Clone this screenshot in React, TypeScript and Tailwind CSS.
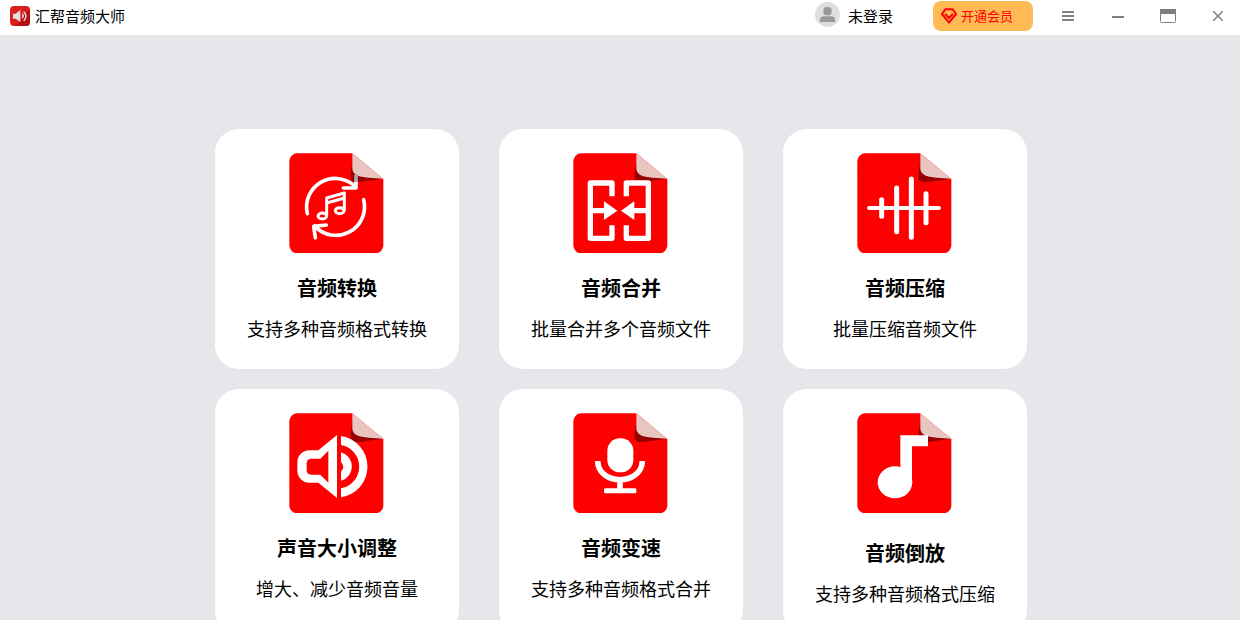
import type { ReactNode } from "react";

function FileIcon({ children }: { children: ReactNode }) {
	return (
		<svg className="w-24 h-[100px]" viewBox="27 23 288 300" fill="none" aria-hidden="true">
			<path
				d="M52 24H217L310 101V300a24 24 0 0 1-24 24H52a24 24 0 0 1-24-24V48a24 24 0 0 1 24-24z"
				fill="#ff0000"
			/>
			<path d="M217 48C214 74 205 106 222 110C244 112 278 103 310 101L240 80z" fill="#980000" />
			<path d="M217 24L310 101C284 96 246 99 228 88C219 82 217 76 217 68z" fill="#e8c6bf" />
			{children}
		</svg>
	);
}

function ConvertGlyph() {
	return (
		<g stroke="#fff" strokeLinecap="round" strokeLinejoin="round">
			<path
				d="M82 205A86 86 0 0 1 226 124M190 128H228V108M251 163A86 86 0 0 1 104 242M106 277L101 243L139 239"
				strokeWidth="11"
			/>
			<path d="M228 88V110" stroke="#a8a8a8" strokeWidth="11" strokeLinecap="butt" />
			<path d="M140 210V158L193 143V194M141 173L193 158" strokeWidth="9" />
			<ellipse cx="127" cy="212" rx="13" ry="9" strokeWidth="9" />
			<ellipse cx="179" cy="196" rx="13" ry="9" strokeWidth="9" />
		</g>
	);
}

function MergeGlyph() {
	return (
		<>
			<path
				d="M144 153V113H79V279H144V240M187 153V113H253V279H187V240M79 196H124M208 196H253"
				stroke="#fff"
				strokeWidth="16"
				strokeLinejoin="round"
			/>
			<path d="M120 168L160 196L120 224zM211 168L171 196L211 224z" fill="#fff" />
		</>
	);
}

function CompressGlyph() {
	return (
		<>
			<path d="M63 188H273" stroke="#fff" strokeWidth="12" strokeLinecap="round" />
			<path
				d="M101 163V213M146 128V259M190 101V276M234 145V232"
				stroke="#fff"
				strokeWidth="15"
				strokeLinecap="round"
			/>
		</>
	);
}

function VolumeGlyph() {
	return (
		<g fill="#fff">
			<path
				fillRule="evenodd"
				d="M171 89V278L115 232H88A36 36 0 0 1 52 196V171A36 36 0 0 1 88 135H115zM145 136L121 160H94Q80 160 80 174V194Q80 208 94 208H121L145 232z"
			/>
			<path d="M183 92A93 93 0 0 1 183 276V249A66 66 0 0 0 183 119z" />
			<path d="M183 141A44 44 0 0 1 183 226V199Q197 184 183 170z" />
		</g>
	);
}

function MicGlyph() {
	return (
		<>
			<rect x="130" y="99" width="78" height="102" rx="37" fill="#fff" />
			<path d="M101 167C103 242 233 242 235 167M168 224V252" stroke="#fff" strokeWidth="17" />
			<rect x="120" y="249" width="97" height="15" rx="4" fill="#fff" />
		</>
	);
}

function NoteGlyph() {
	return (
		<g fill="#fff">
			<ellipse cx="141" cy="231" rx="52" ry="48" />
			<path d="M157 90H240V123H192V232H157z" />
		</g>
	);
}

const features = [
	{ title: "音频转换", desc: "支持多种音频格式转换", glyph: <ConvertGlyph />, spacing: "mt-5" },
	{ title: "音频合并", desc: "批量合并多个音频文件", glyph: <MergeGlyph />, spacing: "mt-5" },
	{ title: "音频压缩", desc: "批量压缩音频文件", glyph: <CompressGlyph />, spacing: "mt-5" },
	{ title: "声音大小调整", desc: "增大、减少音频音量", glyph: <VolumeGlyph />, spacing: "mt-5" },
	{ title: "音频变速", desc: "支持多种音频格式合并", glyph: <MicGlyph />, spacing: "mt-5" },
	{ title: "音频倒放", desc: "支持多种音频格式压缩", glyph: <NoteGlyph />, spacing: "mt-[25px]" },
];

const windowButton = "flex w-11 h-8 items-center justify-center text-[#808080] hover:bg-gray-100";

function TitleBar() {
	return (
		<header className="flex shrink-0 h-[35px] pb-[3px] items-center bg-white">
			<div className="flex items-center gap-[5px] pl-[10px]">
				<svg className="w-5 h-5" viewBox="0 0 60 60" fill="none" aria-hidden="true">
					<rect width="60" height="60" rx="12" fill="#dc1f1f" />
					<path d="M60 8L18 60H48A12 12 0 0 0 60 48z" fill="#b51013" />
					<path d="M9 23H17L31 12V48L17 38H9z" fill="#e2e2e2" />
					<path d="M37 24Q43 30 37 36M41 17Q55 30 41 44" stroke="#e2e2e2" strokeWidth="4" />
				</svg>
				<h1 className="text-[15px] leading-5">汇帮音频大师</h1>
			</div>

			<div className="flex items-center ml-auto">
				<button type="button" className="flex items-start gap-2 mr-10 text-[15px] leading-7">
					<svg className="w-[25px] h-[25px]" viewBox="0 0 75 75" aria-hidden="true">
						<circle cx="37.5" cy="37.5" r="37.5" fill="#dedede" />
						<rect x="25" y="15" width="25" height="25" rx="11" fill="#999" />
						<path d="M15 60V55Q15 43 27 43H48Q60 43 60 55V60z" fill="#999" />
					</svg>
					未登录
				</button>
				<button
					type="button"
					className="flex w-[100px] h-[30px] items-center gap-1 pl-2 mr-[13px] rounded-lg bg-[#ffb955] text-[13px] leading-5 text-[#ff0000]"
				>
					<svg className="w-4 h-4" viewBox="0 0 48 48" fill="none" stroke="currentColor" strokeWidth="6" strokeLinejoin="round" aria-hidden="true">
						<path d="M13 4H35L45 18L24 44L3 18z" />
						<path d="M14 19L24 30L34 19" strokeLinecap="round" />
					</svg>
					开通会员
				</button>
				<div className="flex gap-[6px]">
					<button type="button" aria-label="菜单" className={windowButton}>
						<svg className="w-3 h-3" viewBox="0 0 12 12" stroke="currentColor" strokeWidth="2">
							<path d="M0 2H12M0 6H12M0 10H12" />
						</svg>
					</button>
					<button type="button" aria-label="最小化" className={windowButton}>
						<svg className="w-3 h-3" viewBox="0 0 12 12" stroke="currentColor" strokeWidth="2">
							<path d="M0 7H12" />
						</svg>
					</button>
					<button type="button" aria-label="最大化" className={windowButton}>
						<svg className="w-4 h-[14px]" viewBox="0 0 16 14" fill="none" stroke="currentColor">
							<rect x="0.5" y="0.5" width="15" height="13" rx="1" />
							<path d="M0 2.5H16" strokeWidth="5" />
						</svg>
					</button>
					<button type="button" aria-label="关闭" className={windowButton}>
						<svg className="w-[10px] h-[10px]" viewBox="0 0 10 10" stroke="currentColor" strokeWidth="1.5">
							<path d="M0 0L10 10M10 0L0 10" />
						</svg>
					</button>
				</div>
			</div>
		</header>
	);
}

export default function App() {
	return (
		<div className="flex flex-col h-screen overflow-hidden bg-[#e6e7eb] text-black font-['Noto_Sans_CJK_SC',sans-serif]">
			<TitleBar />
			<main className="flex justify-center pt-[94px] pl-0.5">
				<div className="grid grid-cols-3 gap-x-10 gap-y-5">
					{features.map((feature) => (
						<button
							key={feature.title}
							type="button"
							className="flex flex-col w-61 items-center justify-start pt-6 pb-7 rounded-3xl bg-white"
						>
							<FileIcon>{feature.glyph}</FileIcon>
							<span className={`${feature.spacing} text-xl leading-[30px] font-bold`}>{feature.title}</span>
							<span className="mt-3 text-lg leading-[26px]">{feature.desc}</span>
						</button>
					))}
				</div>
			</main>
		</div>
	);
}
